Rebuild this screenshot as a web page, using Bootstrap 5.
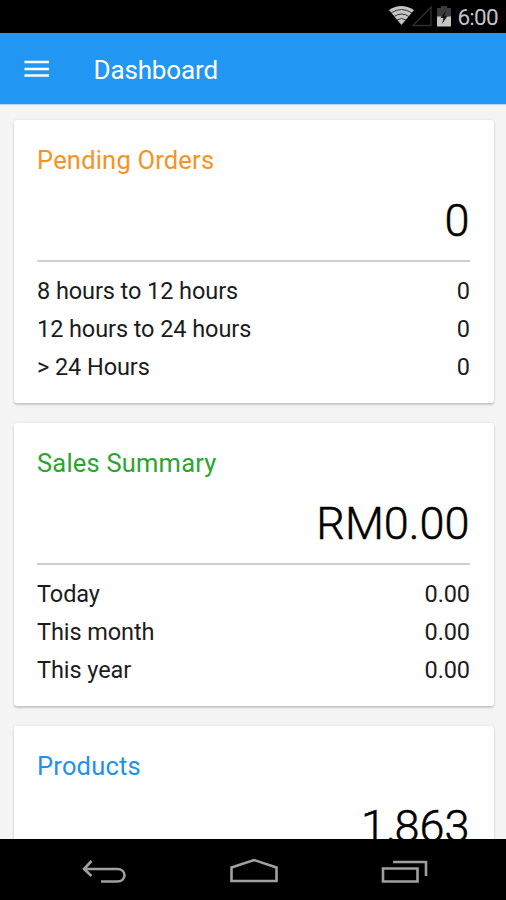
<!DOCTYPE html>
<html lang="en">
<head>
<meta charset="utf-8">
<meta name="viewport" content="width=device-width, initial-scale=1">
<title>Dashboard</title>
<link href="https://cdn.jsdelivr.net/npm/bootstrap@5.3.0/dist/css/bootstrap.min.css" rel="stylesheet">
<style>
body{font-family:Roboto,"Noto Sans",sans-serif;background:#f4f4f4;color:#1c1c1c;height:900px}
.status-bar{height:33px;background:#000;color:#c4c4c4;font-size:23px;padding-right:8px;line-height:33px}
.clock{font-size:22.5px;letter-spacing:-.7px;padding-top:2px;margin-left:-1px}
.app-bar{height:71px;background:#2196f3;color:#fff;padding:0 24px;box-shadow:0 1px 1px #b8d8f2;z-index:1}
.app-title{font-size:26px;margin-left:43.5px;line-height:40px;letter-spacing:-.15px;padding-top:2px}
.feed{padding:16px 12.5px 0 13.5px;gap:20px}
.panel{height:283.2px;border:0;border-radius:3px;padding:21px 23.5px 0;box-shadow:0 2px 2px rgba(0,0,0,.16),0 0 3px rgba(0,0,0,.09)}
.panel-title{font-size:25.5px;line-height:38px;letter-spacing:.2px}
.total{font-size:45px;font-weight:300;-webkit-text-stroke:.5px #000;line-height:60px;margin-top:12px;color:#000;padding-right:.5px}
.rule{height:2px;background:#cfcfcf;margin:9px 0 10px}
.line{font-size:23.5px;line-height:38px;letter-spacing:-.08px}
.orange{color:#f7931e}.green{color:#2ba52f}.blue{color:#2290ec}
.nav-keys{height:61px;background:#000;padding:4px 77px 0 80px}
</style>
<script src="https://cdn.jsdelivr.net/npm/bootstrap@5.3.0/dist/js/bootstrap.bundle.min.js"></script>
</head>
<body class="d-flex flex-column overflow-hidden">
<div class="status-bar d-flex justify-content-end align-items-center flex-shrink-0">
  <svg width="70" height="33" viewBox="0 0 70 33" aria-hidden="true">
    <path d="M1 10Q13 2 26 10L13.500 25Z" fill="#c4c4c4"/>
    <path d="M3 13Q13.500 6 24 13M6 16.500Q13.500 11.500 21 16.500M9 20Q13.500 17 18 20" fill="none" stroke="#333" stroke-width="1"/>
    <path d="M25 25.500L43 7V25.500Z" fill="none" stroke="#303030" stroke-width="1.300"/>
    <path d="M49 8h4V6h6v2h4v9H49Z" fill="#3b3b3b"/>
    <path d="M49 16.500h14V26.500H49Z" fill="#c4c4c4"/>
    <path d="M58 10l-5.500 8h3l-1.500 6 5.500-8h-3Z" fill="#171717"/>
  </svg>
  <span class="clock">6:00</span>
</div>
<header class="app-bar d-flex align-items-center flex-shrink-0">
  <svg width="26" height="18" viewBox="0 0 26 18" aria-label="Menu"><path d="M.5 2h24.500M.5 9h24.500M.5 15.500h24.500" stroke="#fff" stroke-width="2.700"/></svg>
  <span class="app-title">Dashboard</span>
</header>
<main class="feed d-flex flex-column flex-grow-1 overflow-hidden">
  <section class="card panel flex-shrink-0">
    <div class="panel-title orange">Pending Orders</div>
    <div class="total text-end">0</div>
    <div class="rule"></div>
    <div class="line d-flex justify-content-between"><span>8 hours to 12 hours</span><span>0</span></div>
    <div class="line d-flex justify-content-between"><span>12 hours to 24 hours</span><span>0</span></div>
    <div class="line d-flex justify-content-between"><span>&gt; 24 Hours</span><span>0</span></div>
  </section>
  <section class="card panel flex-shrink-0">
    <div class="panel-title green">Sales Summary</div>
    <div class="total text-end">RM0.00</div>
    <div class="rule"></div>
    <div class="line d-flex justify-content-between"><span>Today</span><span>0.00</span></div>
    <div class="line d-flex justify-content-between"><span>This month</span><span>0.00</span></div>
    <div class="line d-flex justify-content-between"><span>This year</span><span>0.00</span></div>
  </section>
  <section class="card panel flex-shrink-0">
    <div class="panel-title blue">Products</div>
    <div class="total text-end">1,863</div>
  </section>
</main>
<nav class="nav-keys d-flex justify-content-between align-items-center flex-shrink-0">
  <svg width="48" height="32" viewBox="0 0 48 32" fill="none" stroke="#a0a0a0" stroke-width="2.600" aria-label="Back"><path d="M11.500 5L4 13L11.500 20M4 13H37C47 13 47 25.500 37 25.500H21"/></svg>
  <svg width="50" height="32" viewBox="0 0 50 32" fill="none" stroke="#a0a0a0" stroke-width="2.600" aria-label="Home"><path d="M2.500 25V11.500L25 4L47.500 11.500V25Z"/></svg>
  <svg width="50" height="32" viewBox="0 0 50 32" fill="none" stroke="#a0a0a0" stroke-width="2.600" aria-label="Recent apps"><path d="M4 12.500H38.500V25.500H4ZM14 6H47V20"/></svg>
</nav>
</body>
</html>
